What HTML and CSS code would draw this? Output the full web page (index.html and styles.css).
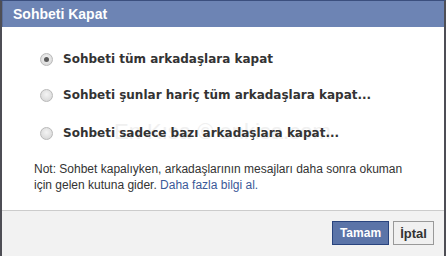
FILE: index.html
```html
<!DOCTYPE html>
<html lang="tr">
<head>
<meta charset="utf-8">
<title>Sohbeti Kapat</title>
<link rel="stylesheet" href="styles.css">
</head>
<body>
<div class="dialog">
  <div class="dialog-header">Sohbeti Kapat</div>
  <div class="dialog-body">
    <div class="watermark" aria-hidden="true">En Kısa © enkisa.com</div>
    <ul class="options">
      <li class="option"><span class="radio checked"></span><span class="label">Sohbeti tüm arkadaşlara kapat</span></li>
      <li class="option"><span class="radio"></span><span class="label">Sohbeti şunlar hariç tüm arkadaşlara kapat...</span></li>
      <li class="option"><span class="radio"></span><span class="label">Sohbeti sadece bazı arkadaşlara kapat...</span></li>
    </ul>
    <p class="note">Not: Sohbet kapalıyken, arkadaşlarının mesajları daha sonra okuman için gelen kutuna gider. <a class="link" href="#">Daha fazla bilgi al.</a></p>
  </div>
  <div class="dialog-footer">
    <button class="btn btn-primary">Tamam</button>
    <button class="btn btn-secondary">İptal</button>
  </div>
</div>
</body>
</html>
```
FILE: styles.css
```css
html, body {
  margin: 0;
  padding: 0;
  background: #ffffff;
}
.dialog {
  width: 446px;
  height: 256px;
  box-sizing: border-box;
  border-left: 2px solid #4e4e55;
  border-right: 2px solid #4e4e55;
  border-top: 1px solid #3b4f7e;
  display: flex;
  flex-direction: column;
  overflow: hidden;
}
.dialog-header {
  height: 26px;
  background: #6d84b4;
  border-left: 1px solid #5b6f9d;
  color: #ffffff;
  font-family: "Liberation Sans", Arial, sans-serif;
  font-weight: bold;
  font-size: 14px;
  line-height: 26px;
  padding-left: 10px;
}
.dialog-body {
  position: relative;
  height: 183px;
  background: #ffffff;
  padding: 0 0 0 30px;
}
.watermark {
  position: absolute;
  left: 112px;
  top: 94px;
  font-family: "Liberation Sans", Arial, sans-serif;
  font-size: 22px;
  line-height: 22px;
  color: #f0f0f0;
  white-space: nowrap;
}
.options {
  position: relative;
  list-style: none;
  margin: 0;
  padding: 24px 0 0 8px;
}
.option {
  display: flex;
  align-items: center;
  height: 16px;
  margin-bottom: 20px;
}
.option:nth-child(2) {
  margin-bottom: 22px;
}
.radio {
  width: 11px;
  height: 11px;
  border-radius: 50%;
  border: 1px solid #b9b9b9;
  background: radial-gradient(circle at 50% 40%, #f4f4f4 0%, #dcdcdc 70%, #cfcfcf 100%);
  box-sizing: content-box;
  margin-right: 10px;
  position: relative;
  flex: none;
}
.radio.checked::after {
  content: "";
  position: absolute;
  left: 3px;
  top: 3px;
  width: 5px;
  height: 5px;
  border-radius: 50%;
  background: #5a5a5a;
}
.label {
  font-family: "DejaVu Sans", Verdana, sans-serif;
  font-weight: bold;
  font-size: 12px;
  color: #333333;
}
.note {
  position: relative;
  margin: 16px 0 0 2px;
  width: 384px;
  font-family: "Liberation Sans", Arial, sans-serif;
  font-size: 12px;
  line-height: 16px;
  color: #333333;
}
.link {
  color: #3b5998;
  text-decoration: none;
}
.dialog-footer {
  flex: 1;
  background: #f2f2f2;
  border-top: 1px solid #cccccc;
  display: flex;
  justify-content: flex-end;
  align-items: flex-start;
  padding: 10px 10px 0 0;
  gap: 4px;
}
.btn {
  height: 24px;
  box-sizing: border-box;
  font-family: "Liberation Sans", Arial, sans-serif;
  font-weight: bold;
  font-size: 12px;
  padding: 0 6px;
  margin: 0;
  cursor: pointer;
}
.btn-primary {
  width: 57px;
  background: #5b74a8;
  border: 1px solid #29447e;
  color: #ffffff;
}
.btn-secondary {
  width: 41px;
  background: #f0f0f0;
  border: 1px solid #999999;
  color: #333333;
  font-size: 13px;
}
```
